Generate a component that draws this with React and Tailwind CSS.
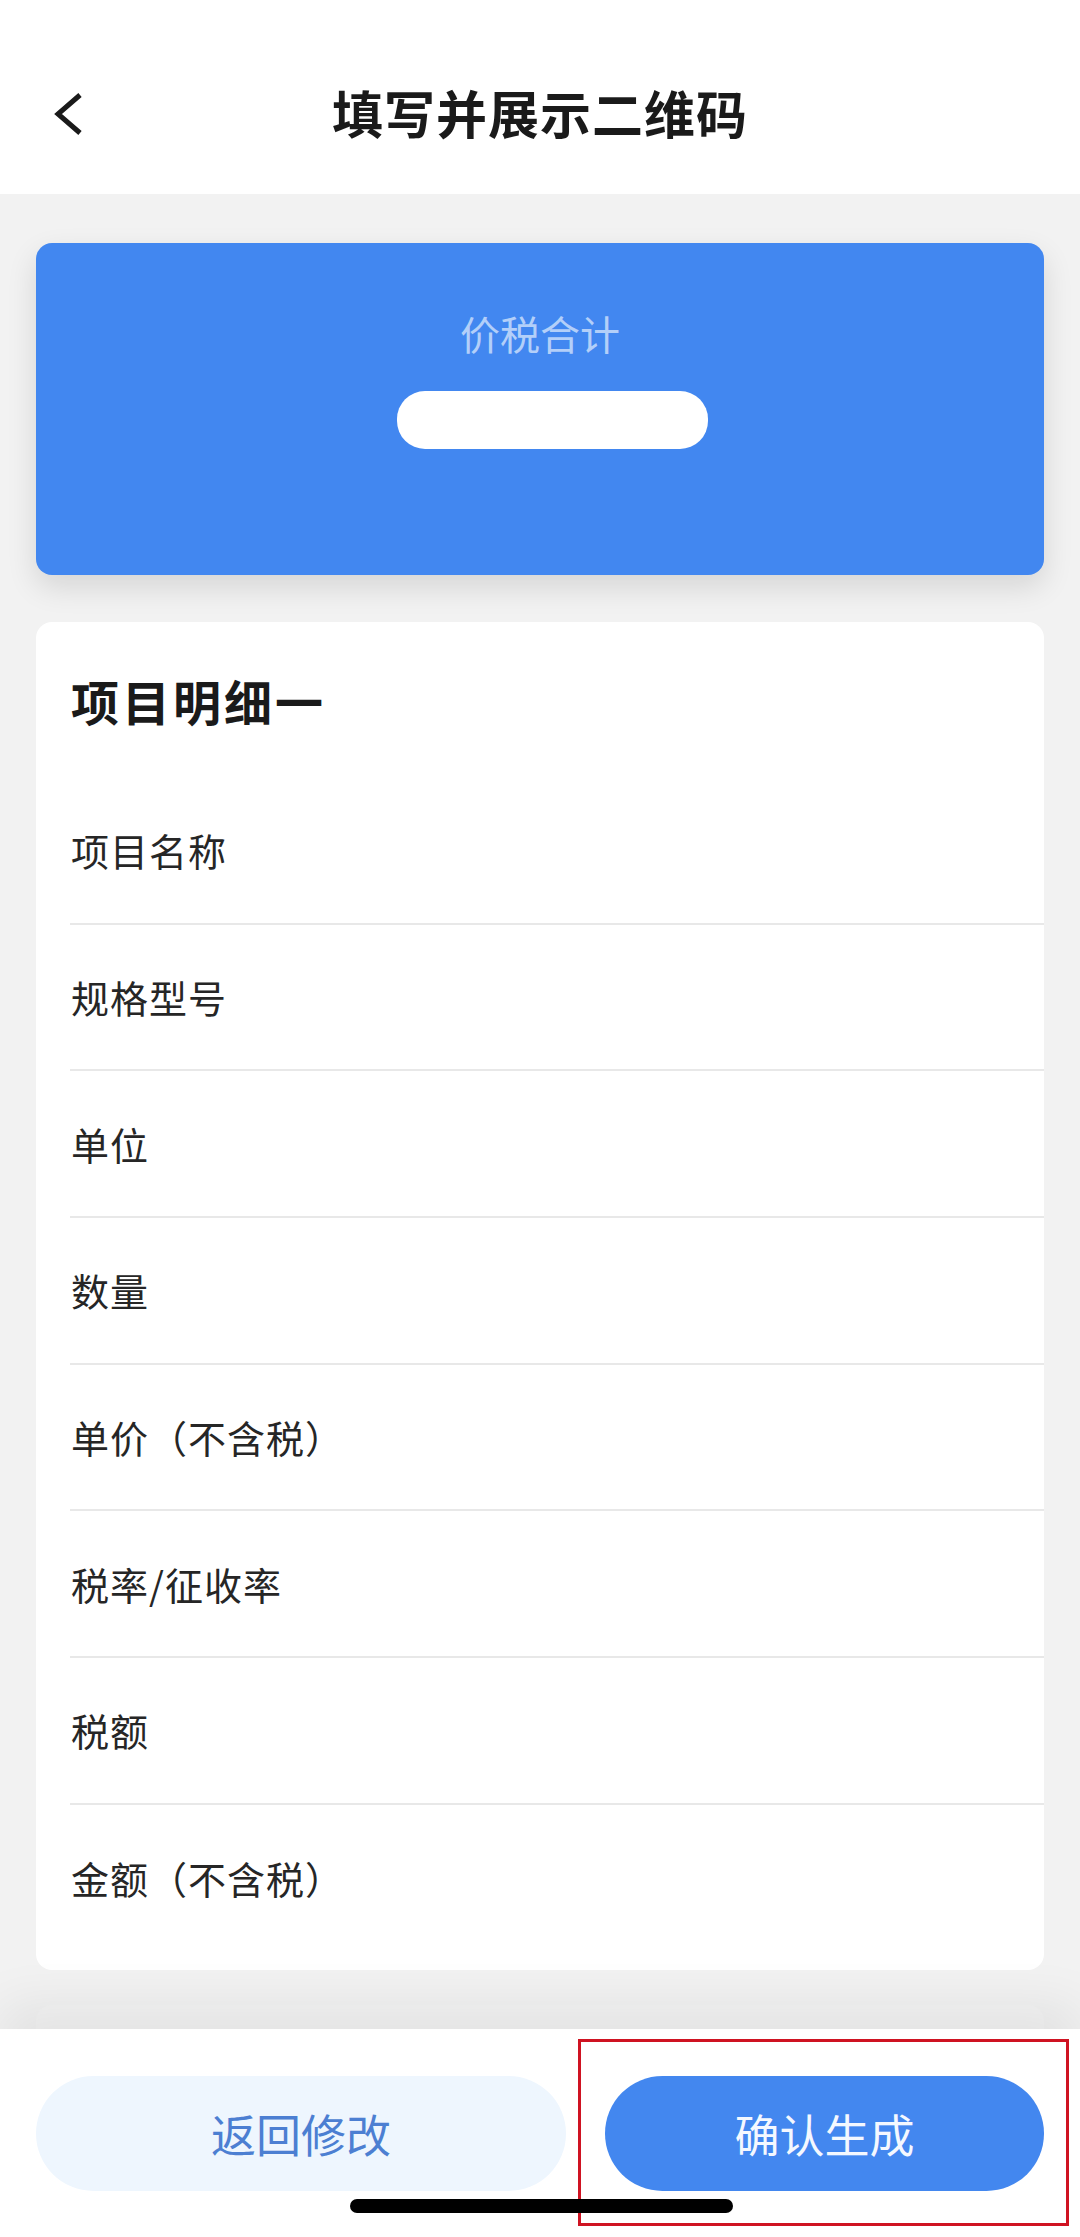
import React from "react";

const rows = [
  "项目名称",
  "规格型号",
  "单位",
  "数量",
  "单价（不含税）",
  "税率/征收率",
  "税额",
  "金额（不含税）",
];

const font = { fontFamily: '"Noto Sans CJK SC", "Noto Sans", sans-serif' };

const BackIcon = () => (
  <svg width="30" height="44" viewBox="0 0 30 44" fill="none">
    <path d="M27 3 L5 22 L27 41" stroke="#1a1a1a" strokeWidth="5" strokeLinejoin="miter" />
  </svg>
);

const App = () => {
  return (
    <div className="w-full h-[2237px] flex flex-col bg-[#f2f2f2] overflow-hidden" style={font}>
      {/* header */}
      <div className="h-[194px] shrink-0 bg-white grid grid-cols-[1fr_auto_1fr] items-center pt-[30px]">
        <div className="pl-[53px] flex items-center pt-[4px]">
          <BackIcon />
        </div>
        <h1 className="text-[51px] leading-[56px] font-bold tracking-[1px] text-[#1a1a1a]">填写并展示二维码</h1>
        <div />
      </div>

      {/* scroll area */}
      <div className="flex-1 overflow-hidden px-[36px] pt-[49px]">
        <div className="h-[332px] rounded-[16px] bg-[#4287f0] shadow-[0_12px_30px_rgba(0,0,0,0.12)] flex flex-col items-center pt-[70px]">
          <p className="text-[40px] leading-[40px] text-[#b3cff9]">价税合计</p>
          <div className="mt-[38px] ml-[24px] w-[311px] h-[58px] rounded-[28px] bg-white" />
        </div>

        <div className="mt-[47px] rounded-[16px] bg-white pb-[18px]">
          <div className="h-[156px] flex items-center pl-[35px]">
            <h2 className="text-[48px] leading-[52px] font-bold tracking-[3px] text-[#1a1a1a]">项目明细一</h2>
          </div>
          {rows.map((r, i) => (
            <div
              key={r}
              className={
                "ml-[34px] h-[146.7px] flex items-center " +
                (i < rows.length - 1 ? "border-b-2 border-[#e8e8e8]" : "")
              }
            >
              <span className="pl-[1px] text-[38px] leading-[44px] tracking-[1px] text-[#262626]">{r}</span>
            </div>
          ))}
        </div>

        <div className="mt-[35px] h-[120px] rounded-[16px] bg-[#f4f4f4]" />
      </div>

      {/* bottom bar */}
      <div className="relative z-10 h-[208px] shrink-0 bg-white shadow-[0_-24px_50px_rgba(0,0,0,0.07)] flex gap-[39px] px-[36px] pt-[47px]">
        <button className="w-[530px] h-[115px] rounded-full bg-[#eef6fe] text-[45px] text-[#4c7fd2]">
          返回修改
        </button>
        <button className="flex-1 h-[115px] rounded-full bg-[#4387ef] text-[45px] text-[#f4f8ff]">
          确认生成
        </button>

        <div className="absolute left-[578px] top-[10px] w-[491px] h-[187px] border-[3px] border-[#cf1322]" />
        <div className="absolute left-[350px] top-[170px] w-[383px] h-[14px] rounded-full bg-black" />
      </div>
    </div>
  );
};

export default App;
